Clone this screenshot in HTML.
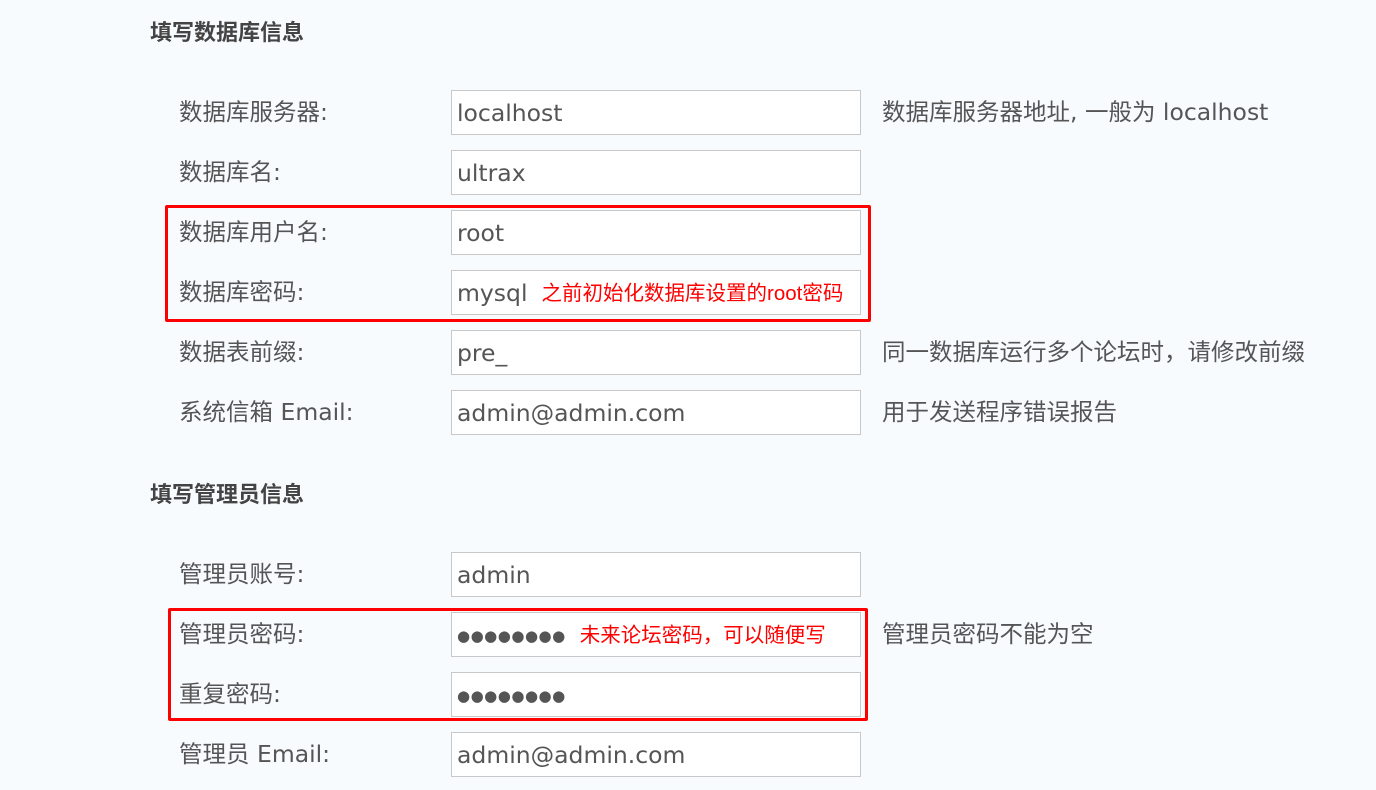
<!DOCTYPE html>
<html><head><meta charset="utf-8"><style>
body{margin:0;width:1376px;height:790px;background:#f7fbfe;font-family:"DejaVu Sans","Noto Sans CJK SC",sans-serif;color:#555;position:relative;overflow:hidden}
h3{position:absolute;margin:0;font-size:22px;font-weight:bold;color:#444;left:150px;font-family:"Liberation Sans","Noto Sans CJK SC",sans-serif}
.l{position:absolute;left:179px;font-size:23.5px;line-height:45px;white-space:nowrap}
.i{position:absolute;left:451px;width:403px;height:43px;border:1px solid #c8c8c8;background:#fff;font-size:23.5px;line-height:44px;padding-left:5px;color:#555;white-space:nowrap}
.h{position:absolute;left:882px;font-size:23.5px;line-height:45px;white-space:nowrap}
.n{color:#f00;font-size:20.5px;margin-left:14px;vertical-align:1px;font-family:"Liberation Sans","Noto Sans CJK SC",sans-serif}
.d{font-size:15px;letter-spacing:0.5px;vertical-align:2px}
.box{position:absolute;border:3px solid #f00;border-radius:2px}
</style></head><body>
<h3 style="top:15px">填写数据库信息</h3>
<div class="l" style="top:90px">数据库服务器:</div><div class="i" style="top:90px">localhost</div><div class="h" style="top:90px">数据库服务器地址, 一般为 localhost</div>
<div class="l" style="top:150px">数据库名:</div><div class="i" style="top:150px">ultrax</div>
<div class="l" style="top:210px">数据库用户名:</div><div class="i" style="top:210px">root</div>
<div class="l" style="top:270px">数据库密码:</div><div class="i" style="top:270px">mysql<span class="n">之前初始化数据库设置的root密码</span></div>
<div class="l" style="top:330px">数据表前缀:</div><div class="i" style="top:330px">pre_</div><div class="h" style="top:330px">同一数据库运行多个论坛时，请修改前缀</div>
<div class="l" style="top:390px">系统信箱 Email:</div><div class="i" style="top:390px">admin@admin.com</div><div class="h" style="top:390px">用于发送程序错误报告</div>
<div class="box" style="left:165px;top:205px;width:700px;height:111px"></div>
<h3 style="top:477px">填写管理员信息</h3>
<div class="l" style="top:552px">管理员账号:</div><div class="i" style="top:552px">admin</div>
<div class="l" style="top:612px">管理员密码:</div><div class="i" style="top:612px"><span class="d">●●●●●●●●</span><span class="n">未来论坛密码，可以随便写</span></div><div class="h" style="top:612px">管理员密码不能为空</div>
<div class="l" style="top:672px">重复密码:</div><div class="i" style="top:672px"><span class="d">●●●●●●●●</span></div>
<div class="l" style="top:732px">管理员 Email:</div><div class="i" style="top:732px">admin@admin.com</div>
<div class="box" style="left:168px;top:608px;width:694px;height:107px"></div>
</body></html>
